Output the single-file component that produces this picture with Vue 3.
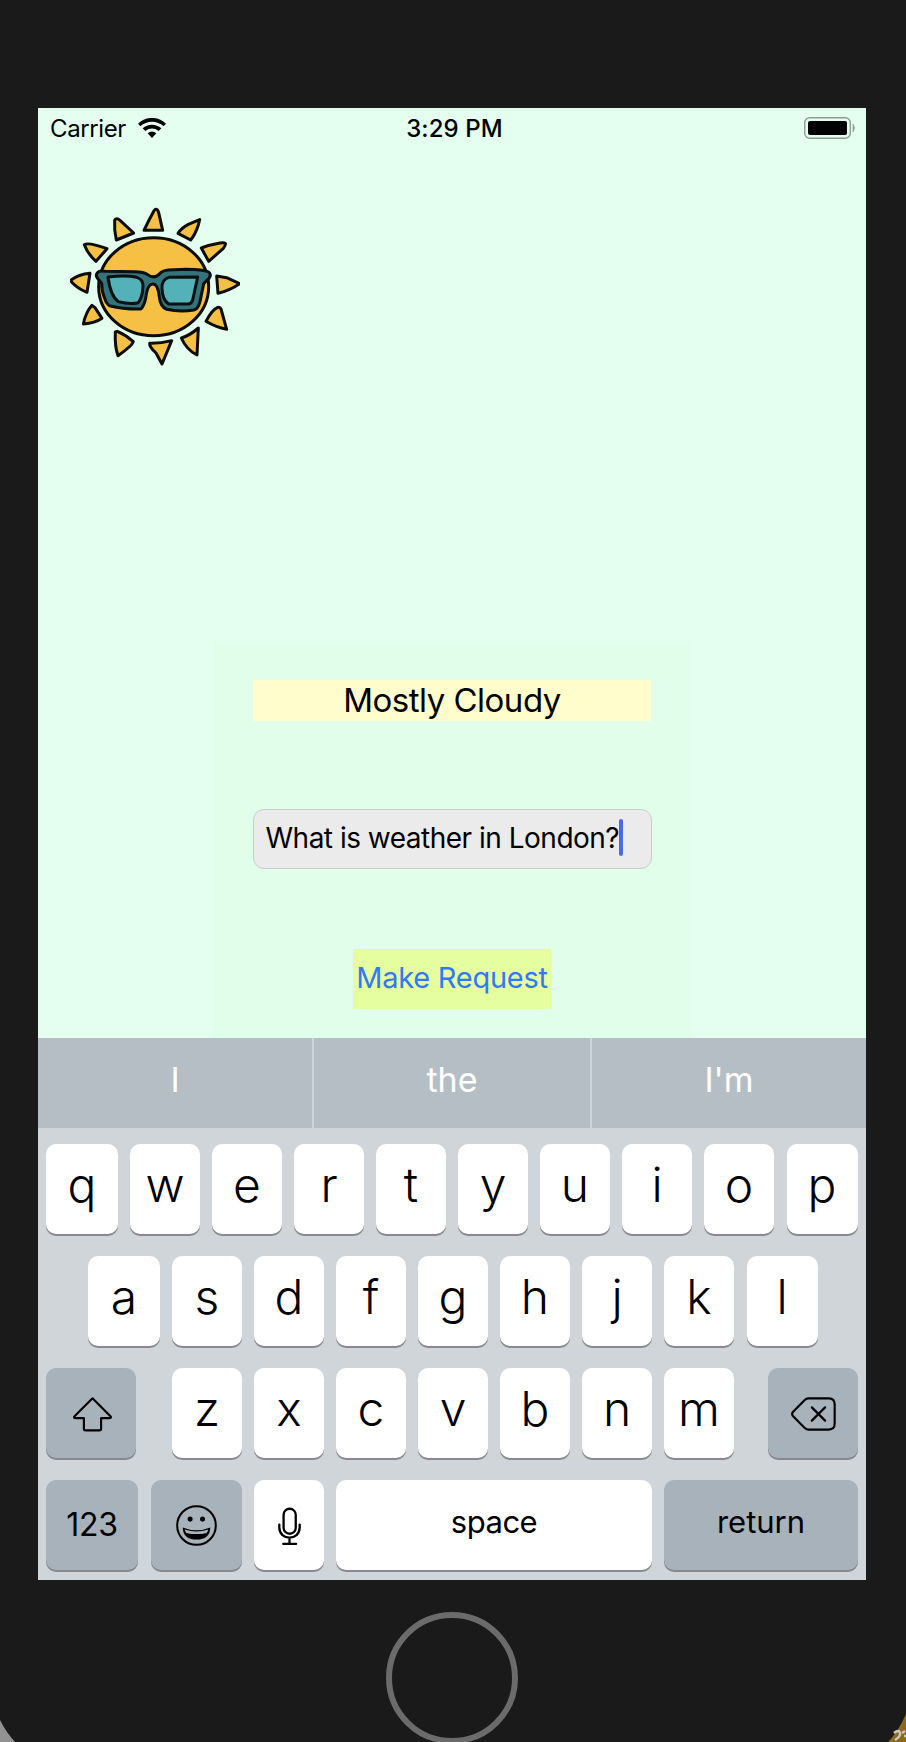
<script setup>
const suggestions = ['I', 'the', "I'm"]
const topRow = 'qwertyuiop'.split('')
const middleRow = 'asdfghjkl'.split('')
const bottomRow = 'zxcvbnm'.split('')

// Sun rays, each a rounded triangle
const rays = [
  'M288 43 Q293 43 296 53 L308 106 L252 106 Q268 72 282 47 Q285 43 288 43Z',
  'M419 74 L415 90 Q405 120 392 135 L354 115 Q365 98 385 88Z',
  'M496 145 Q498 150 490 160 L446 199 L424 159 Q450 149 480 144 Q492 142 496 145Z',
  'M470 243 L500 248 L539 266 Q510 286 474 295Z',
  'M473 337 Q480 335 483 342 L500 403 Q468 397 438 379 Q455 345 473 337Z',
  'M415 399 L411 480 Q380 465 364 429 Q390 421 415 399Z',
  'M269 445 Q300 446 335 437 L306 507 L288 474 Q268 456 269 445Z',
  'M166 411 L172 409 Q198 420 220 440 Q216 453 174 482 Q164 455 166 411Z',
  'M96 331 L105 338 L126 370 Q105 385 70 387 Q78 350 96 331Z',
  'M90 235 L81 292 Q50 280 31 257 Q55 238 90 235Z',
  'M73 149 Q85 141 141 161 L108 199 Q84 178 73 149Z',
  'M164 76 Q169 67 180 76 L221 114 L169 135 Q162 105 164 76Z',
]
</script>

<template>
  <main class="device">
    <section class="screen">
      <header class="status">
        <div class="carrier">
          <span>Carrier</span>
          <svg class="wifi" viewBox="0 0 84 60" aria-hidden="true">
            <path d="M0 17 C23 -6 61 -6 84 17 L77 25 C57 7 27 7 7 25Z" />
            <path d="M14 31 C30 17 54 17 70 31 L62 39 C50 29 34 29 22 39Z" />
            <path d="M29 46 Q42 35 55 46 L42 60Z" />
          </svg>
        </div>
        <span class="time">3:29 PM</span>
        <div class="battery-slot">
          <svg class="battery" viewBox="0 0 52 22" aria-hidden="true">
            <rect x=".7" y=".7" width="45.6" height="20.6" rx="5" fill="none" stroke="#8c9d95" stroke-width="1.4" />
            <rect x="4" y="4" width="39" height="14" rx="2" />
            <path d="M49 7 Q52 11 49 15Z" fill="#8c9d95" stroke="#8c9d95" stroke-width=".6" />
          </svg>
        </div>
      </header>

      <svg class="sun" viewBox="30 0 510 540" aria-hidden="true">
        <g fill="#f5c043" stroke="#0c0d09" stroke-width="9" stroke-linejoin="round">
          <path v-for="ray in rays" :key="ray" :d="ray" />
          <ellipse cx="281" cy="275" rx="165" ry="147" />
        </g>
        <g stroke="#0a1011" stroke-width="9" stroke-linejoin="round">
          <path fill="#34737a" d="M112 233 Q118 226 135 229 L225 230 Q251 230 263 239 Q282 253 297 238 Q308 226 325 225 L380 223 Q429 223 446 231 Q455 239 447 250 L431 266 L420 320 Q414 343 402 345 Q360 352 320 343 Q301 335 298 306 Q294 266 278 267 Q262 267 257 310 Q251 336 242 342 Q190 343 151 333 Q140 329 134 310 Q125 290 125 265 L112 249 Q106 240 112 233Z" />
          <path fill="#54b1b7" d="M144 246 Q200 240 230 247 Q249 252 249 274 Q248 305 235 323 Q210 329 175 320 Q151 302 144 246Z" />
          <path fill="#54b1b7" d="M327 247 L413 246 L398 315 Q394 328 382 327 L326 327 Q307 315 306 280 Q304 254 327 247Z" />
        </g>
      </svg>

      <form class="panel" @submit.prevent>
        <div class="answer">Mostly Cloudy</div>
        <div class="field"><span>What is weather in London?</span><i class="caret"></i></div>
        <button class="request" type="submit">Make Request</button>
      </form>

      <section class="keyboard">
        <div class="suggestions">
          <div v-for="word in suggestions" :key="word" class="suggestion">{{ word }}</div>
        </div>
        <div class="rows">
          <div class="row">
            <div v-for="k in topRow" :key="k" class="key letter">{{ k }}</div>
          </div>
          <div class="row middle">
            <div v-for="k in middleRow" :key="k" class="key letter">{{ k }}</div>
          </div>
          <div class="row spread">
            <div class="key dark wide">
              <svg class="shift" viewBox="0 0 118 104" aria-hidden="true">
                <path d="M59 3 L114 58 Q116 63 110 63 H85 V95 Q85 100 80 100 H38 Q33 100 33 95 V63 H8 Q2 63 4 58Z" fill="none" stroke="#000" stroke-width="6.500" stroke-linejoin="round" />
              </svg>
            </div>
            <div class="group">
              <div v-for="k in bottomRow" :key="k" class="key letter">{{ k }}</div>
            </div>
            <div class="key dark wide">
              <svg class="delete" viewBox="0 0 136 102" aria-hidden="true">
                <g fill="none" stroke="#000" stroke-width="6.500" stroke-linecap="round" stroke-linejoin="round">
                  <path d="M52 4 H114 Q132 4 132 22 V80 Q132 98 114 98 H52 Q46 98 40 92 L5 56 Q2 51 5 46 L40 10 Q46 4 52 4Z" />
                  <path d="M63 31 L103 71 M103 31 L63 71" />
                </g>
              </svg>
            </div>
          </div>
          <div class="row">
            <div class="key dark numbers">123</div>
            <div class="key dark emoji">
              <svg class="smile" viewBox="0 0 122 122" aria-hidden="true">
                <circle cx="61" cy="61" r="57.5" fill="none" stroke="#000" stroke-width="6" />
                <circle cx="42" cy="42" r="7.5" />
                <circle cx="79" cy="42" r="7.5" />
                <path d="M20 67 Q61 84 102 67 Q101 103 61 103 Q21 103 20 67Z" />
                <path d="M26 73 Q61 85 96 73 Q95 79 91 83 Q61 90 31 83 Q27 79 26 73Z" fill="#a8b2bb" />
              </svg>
            </div>
            <div class="key mic-key">
              <svg class="mic" viewBox="0 0 70 116" aria-hidden="true">
                <g fill="none" stroke="#000" stroke-width="7" stroke-linecap="round">
                  <rect x="17" y="4" width="37" height="76" rx="18.500" />
                  <path d="M4 52 V61 C4 102 66 102 66 61 V52 M35 93 V110 M16 111 H55" />
                </g>
              </svg>
            </div>
            <div class="key word space">space</div>
            <div class="key dark word return">return</div>
          </div>
        </div>
      </section>
    </section>

    <div class="home"></div>

    <svg class="corner left" viewBox="0 0 16 22" aria-hidden="true">
      <path d="M0 0 Q6 12 15 22 H0Z" fill="#929292" />
    </svg>
    <svg class="corner right" viewBox="0 0 18 28" aria-hidden="true">
      <path d="M18 0 Q10 18 0 28 H18Z" fill="#8a681c" />
      <path d="M6 19 Q11 15 12 19 Q13 22 7 26 M14 19 L17 17 M16 22 L18 22" fill="none" stroke="#ccc8bd" stroke-width="2.500" />
    </svg>
  </main>
</template>

<style>
body {
  margin: 0;
  background: #1a1a1a;
}
</style>

<style scoped>
.device {
  position: relative;
  display: flex;
  flex-direction: column;
  align-items: center;
  box-sizing: border-box;
  width: 906px;
  height: 1742px;
  padding: 108px 40px 0 38px;
  overflow: hidden;
  background: #1a1a1a;
  color: #000;
  font-family: Inter, "Liberation Sans", sans-serif;
}
.screen {
  display: flex;
  flex-direction: column;
  flex: none;
  width: 828px;
  height: 1472px;
  background: #e4fef0;
}
.status {
  display: grid;
  grid-template-columns: 1fr auto 1fr;
  height: 87px;
  padding: 0 10px 0 12px;
  font-size: 24px;
  line-height: 41px;
}
.carrier {
  display: flex;
  gap: 12px;
  letter-spacing: -0.4px;
}
.wifi {
  width: 28px;
  height: 20px;
  margin-top: 10px;
}
.time {
  padding-left: 3px;
  font-weight: 500;
  letter-spacing: 0.1px;
}
.battery-slot {
  display: flex;
  justify-content: flex-end;
}
.battery {
  width: 52px;
  height: 22px;
  margin-top: 9px;
}
.sun {
  width: 170px;
  height: 180px;
  margin-left: 32px;
}
.panel {
  display: flex;
  flex-direction: column;
  align-items: center;
  box-sizing: border-box;
  width: 478px;
  height: 397px;
  margin: auto 0 0 175px;
  padding-top: 39px;
  background: #e0feea;
}
.answer {
  width: 398px;
  height: 41px;
  background: #fffdcb;
  font-size: 33px;
  line-height: 41px;
  letter-spacing: -0.5px;
  text-align: center;
}
.field {
  display: flex;
  box-sizing: border-box;
  width: 399px;
  height: 60px;
  margin-top: 88px;
  padding-left: 12px;
  border: 1px solid #c6cfca;
  border-radius: 11px;
  background: #ebebeb;
  font-size: 28px;
  line-height: 56px;
  letter-spacing: -0.5px;
  white-space: nowrap;
}
.caret {
  width: 4px;
  height: 37px;
  margin-top: 9px;
  border-radius: 2px;
  background: #4b69e8;
}
.request {
  width: 198px;
  height: 60px;
  margin-top: 80px;
  padding: 0 0 2px;
  border: 0;
  background: #e5fe9f;
  color: #3279f6;
  font: 29px/58px Inter, "Liberation Sans", sans-serif;
  letter-spacing: -0.25px;
  white-space: nowrap;
}
.keyboard {
  height: 542px;
  background: #d0d5d9;
}
.suggestions {
  display: grid;
  grid-template-columns: 274px 276px 274px;
  gap: 2px;
  height: 90px;
}
.suggestion {
  background: #b6bec5;
  color: #fff;
  font-size: 34px;
  line-height: 83px;
  text-align: center;
}
.rows {
  display: flex;
  flex-direction: column;
  gap: 22px;
  padding: 16px 8px 0;
}
.row,
.group {
  display: flex;
  gap: 12px;
}
.middle {
  padding-left: 42px;
}
.spread {
  justify-content: space-between;
}
.group {
  margin-left: 2px;
}
.key {
  display: flex;
  justify-content: center;
  flex: none;
  width: 70px;
  height: 90px;
  border-radius: 10px;
  background: #fff;
  box-shadow: 0 2px 0 #868a8e;
}
.row > .letter:first-child {
  width: 72px;
}
.row > .letter:last-child {
  width: 71px;
  margin-left: 0.5px;
}
.letter {
  font-size: 48px;
  font-weight: 340;
  line-height: 81px;
}
.dark {
  background: #a8b2ba;
}
.wide {
  width: 90px;
}
.shift {
  width: 39px;
  height: 35px;
  margin: 29px 0 0 2px;
}
.delete {
  width: 45px;
  height: 34px;
  margin-top: 29px;
}
.numbers {
  width: 92px;
  font-size: 32px;
  line-height: 89px;
  letter-spacing: -0.3px;
}
.emoji {
  width: 91px;
  margin-left: 1px;
}
.smile {
  width: 41px;
  height: 41px;
  margin-top: 25px;
}
.mic {
  width: 23px;
  height: 39px;
  margin-top: 27px;
}
.word {
  font-size: 31px;
  line-height: 84px;
}
.space {
  width: 316px;
  letter-spacing: -0.5px;
}
.return {
  width: 194px;
}
.home {
  box-sizing: border-box;
  flex: none;
  width: 132px;
  height: 132px;
  margin-top: 32px;
  border: 6px solid #6b6b6b;
  border-radius: 50%;
}
.corner {
  position: absolute;
  bottom: 0;
}
.left {
  left: 0;
  width: 16px;
  height: 22px;
}
.right {
  right: 0;
  width: 18px;
  height: 28px;
}
</style>
